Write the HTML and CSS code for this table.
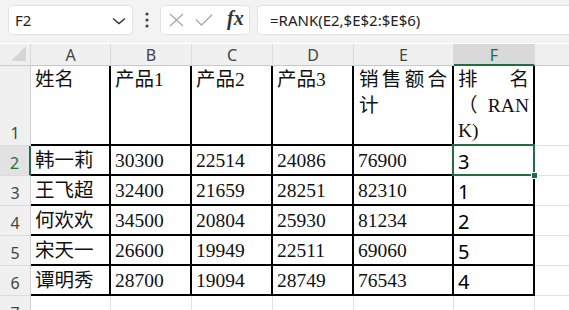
FILE: index.html
```html
<!DOCTYPE html>
<html lang="zh">
<head>
<meta charset="utf-8">
<link rel="stylesheet" href="styles.css">
</head>
<body>
<div class="toolbar">
  <div class="namebox">
    <span class="nb-text">F2</span>
    <svg class="chev" width="14" height="8" viewBox="0 0 14 8"><path d="M1 1.5 L7 6.5 L13 1.5" fill="none" stroke="#333" stroke-width="1.4"/></svg>
  </div>
  <div class="dots">
    <svg width="4" height="16" viewBox="0 0 4 16"><circle cx="2" cy="2" r="1.6" fill="#444"/><circle cx="2" cy="8" r="1.6" fill="#444"/><circle cx="2" cy="14" r="1.6" fill="#444"/></svg>
  </div>
  <div class="fnbox">
    <svg class="ico" width="17" height="14" viewBox="0 0 17 14"><path d="M2 1 L15 13 M15 1 L2 13" stroke="#a8a8a8" stroke-width="1.3" fill="none"/></svg>
    <svg class="ico" width="18" height="12" viewBox="0 0 18 12"><path d="M1 5.5 L6.5 11 L17 0.8" stroke="#a8a8a8" stroke-width="1.3" fill="none"/></svg>
    <span class="fx">fx</span>
  </div>
  <div class="formula">=RANK(E2,$E$2:$E$6)</div>
</div>

<div class="sheet">
  <div class="corner"><div class="tri"></div></div>
  <div class="ch">A</div>
  <div class="ch">B</div>
  <div class="ch">C</div>
  <div class="ch">D</div>
  <div class="ch">E</div>
  <div class="ch ch-sel">F</div>
  <div class="ch ch-rest"></div>

  <div class="rh">1</div>
  <div class="c c-top">姓名</div>
  <div class="c c-top">产品1</div>
  <div class="c c-top">产品2</div>
  <div class="c c-top">产品3</div>
  <div class="c c-top c-e1">
    <div class="jline"><span>销</span><span>售</span><span>额</span><span>合</span></div>
    <div>计</div>
  </div>
  <div class="c c-top c-f1">
    <div class="jline"><span>排</span><span>名</span></div>
    <div class="jline"><span>（</span><span>RAN</span></div>
    <div>K)</div>
  </div>
  <div class="g"></div>

  <div class="rh rh-sel">2</div>
  <div class="c">韩一莉</div>
  <div class="c">30300</div>
  <div class="c">22514</div>
  <div class="c">24086</div>
  <div class="c">76900</div>
  <div class="c c-rank c-active">3<div class="selbox"><div class="handle"></div></div></div>
  <div class="g"></div>

  <div class="rh">3</div>
  <div class="c">王飞超</div>
  <div class="c">32400</div>
  <div class="c">21659</div>
  <div class="c">28251</div>
  <div class="c">82310</div>
  <div class="c c-rank">1</div>
  <div class="g"></div>

  <div class="rh">4</div>
  <div class="c">何欢欢</div>
  <div class="c">34500</div>
  <div class="c">20804</div>
  <div class="c">25930</div>
  <div class="c">81234</div>
  <div class="c c-rank">2</div>
  <div class="g"></div>

  <div class="rh">5</div>
  <div class="c">宋天一</div>
  <div class="c">26600</div>
  <div class="c">19949</div>
  <div class="c">22511</div>
  <div class="c">69060</div>
  <div class="c c-rank">5</div>
  <div class="g"></div>

  <div class="rh">6</div>
  <div class="c">谭明秀</div>
  <div class="c">28700</div>
  <div class="c">19094</div>
  <div class="c">28749</div>
  <div class="c">76543</div>
  <div class="c c-rank">4</div>
  <div class="g"></div>

  <div class="rh">7</div>
  <div class="e"></div>
  <div class="e"></div>
  <div class="e"></div>
  <div class="e"></div>
  <div class="e"></div>
  <div class="e"></div>
  <div class="g"></div>
</div>
</body>
</html>
```

FILE: styles.css
```css
* { box-sizing: border-box; }
html, body { margin: 0; padding: 0; background: #fff; overflow: hidden; }
body { width: 569px; height: 310px; }

.toolbar {
  height: 43px;
  background: #f3f3f3;
  display: flex;
  align-items: flex-start;
  padding: 5px 0 0 8px;
  font-family: "Noto Sans", "Liberation Sans", sans-serif;
  color: #222;
}
.namebox {
  width: 125px;
  height: 30px;
  background: #fff;
  border: 1px solid #e2e2e2;
  border-radius: 5px;
  display: flex;
  align-items: center;
  justify-content: space-between;
  padding: 0 6px 0 6px;
}
.nb-text { font-size: 15px; }
.chev { margin-top: 2px; }
.dots {
  width: 27px;
  height: 30px;
  display: flex;
  align-items: center;
  justify-content: center;
}
.fnbox {
  width: 90px;
  height: 30px;
  background: #fff;
  border: 1px solid #e2e2e2;
  border-radius: 5px;
  display: flex;
  align-items: center;
  padding: 0 0 0 7px;
  gap: 10px;
}
.fx {
  font-family: "Liberation Serif", serif;
  font-style: italic;
  font-weight: bold;
  font-size: 20px;
  color: #333;
  margin-left: 4px;
  margin-top: -3px;
}
.formula {
  flex: 1;
  margin-left: 7px;
  height: 30px;
  background: #fff;
  border: 1px solid #e2e2e2;
  border-right: none;
  border-radius: 5px 0 0 5px;
  display: flex;
  align-items: center;
  padding-left: 12px;
  font-size: 15px;
  color: #222;
}

.sheet {
  margin-top: 1px;
  display: grid;
  grid-template-columns: 31px 80px 81px 81px 81px 100px 81px 1fr;
  grid-template-rows: 22px 80px 30px 30px 30px 30px 30px 30px;
}
.corner {
  background: #f0f0f0;
  border-right: 1px solid #d8d8d8;
  border-bottom: 1px solid #c8c8c8;
  position: relative;
}
.tri {
  position: absolute;
  right: 4px;
  bottom: 4px;
  width: 0;
  height: 0;
  border-left: 15px solid transparent;
  border-bottom: 15px solid #d6d6d6;
}
.ch {
  background: #f0f0f0;
  border-right: 1px solid #dadada;
  border-bottom: 1px solid #c8c8c8;
  font-family: "Noto Sans", "Liberation Sans", sans-serif;
  font-size: 16px;
  color: #444;
  display: flex;
  align-items: center;
  justify-content: center;
  line-height: 1;
  padding-top: 1px;
}
.ch-sel {
  background: #d9d9d9;
  color: #1f6f43;
  border-bottom: 2px solid #1f6f43;
}
.ch-rest { border-right: none; }

.rh {
  background: #f0f0f0;
  border-right: 1px solid #d0d0d0;
  border-bottom: 1px solid #dcdcdc;
  font-family: "Noto Sans", "Liberation Sans", sans-serif;
  font-size: 16px;
  color: #444;
  display: flex;
  align-items: flex-end;
  justify-content: center;
  padding-bottom: 2px;
  line-height: 20px;
}
.rh-sel {
  background: #e2e2e2;
  color: #1f6f43;
  border-right: 2px solid #1f6f43;
}

.c {
  border-right: 2px solid #000;
  border-bottom: 2px solid #000;
  font-family: "Liberation Serif", "Noto Sans CJK SC", serif;
  font-size: 19.5px;
  color: #111;
  line-height: 25px;
  padding: 0 4px 1px 4px;
  display: flex;
  align-items: flex-end;
  white-space: nowrap;
}
.c-top {
  display: block;
  padding-top: 1px;
  line-height: 25.5px;
}
.c-e1 { padding: 1px 5px 0 5px; }
.c-f1 { padding: 1px 4px 0 4px; }
.jline {
  display: flex;
  justify-content: space-between;
}
.c-rank {
  font-family: "Noto Sans", "Liberation Sans", sans-serif;
  font-size: 20px;
  color: #000;
  padding-bottom: 0;
}
.c-active { position: relative; }
.selbox {
  position: absolute;
  left: -2px;
  top: -2px;
  right: -2px;
  bottom: -2px;
  border: 2px solid #1f6f43;
}
.handle {
  position: absolute;
  right: -5px;
  bottom: -5px;
  width: 7px;
  height: 7px;
  background: #1f6f43;
  border: 1px solid #fff;
}
.g {
  border-bottom: 1px solid #e1e1e1;
}
.e {
  border-right: 1px solid #e1e1e1;
}
```
